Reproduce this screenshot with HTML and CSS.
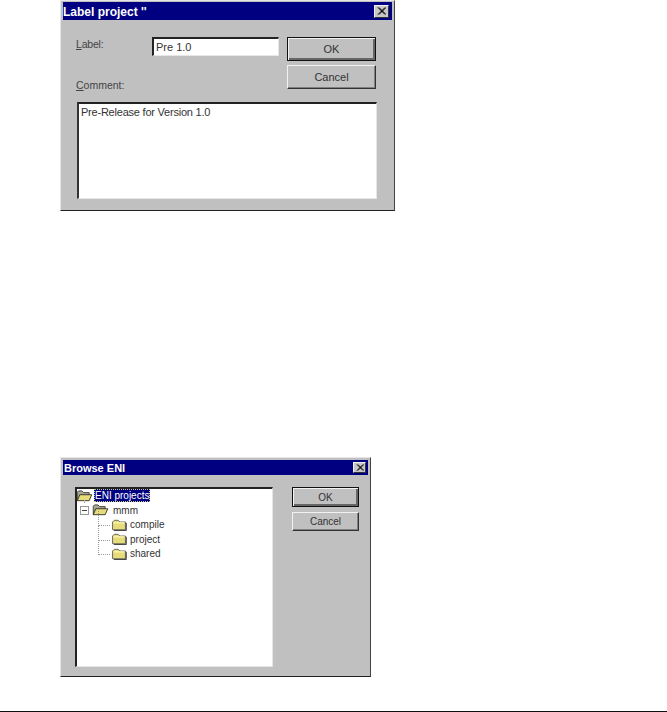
FILE: index.html
```html
<!DOCTYPE html>
<html lang="en">
<head>
<meta charset="utf-8">
<title>ENI dialogs</title>
<link rel="stylesheet" href="styles.css">
</head>
<body>
<svg class="defs" width="0" height="0" aria-hidden="true">
  <symbol id="folder" viewBox="0 0 18 14">
    <path d="M1.5 12.5V3.5L3.5 1.5H8L10 3.5H16.5V12.5Z" fill="#e6dc78" stroke="#555" stroke-width="1"/>
    <path d="M2.5 4.5H15.5" stroke="#fff6b0" stroke-width="1.5"/>
    <path d="M17.5 4.5V13.5H3" stroke="#222" stroke-width="1" fill="none"/>
  </symbol>
  <symbol id="folder-open" viewBox="0 0 20 14">
    <path d="M1.5 12.5V2.5L3 1H7L9 3H15.5V5.5" fill="#a8a890" stroke="#333" stroke-width="1"/>
    <path d="M1.5 12.5L4.5 5.5H18.5L15.5 12.5Z" fill="#e6dc78" stroke="#222" stroke-width="1"/>
  </symbol>
</svg>

<section class="dialog dialog-label">
  <header class="titlebar">
    <span class="title">Label project ''</span>
    <span class="close"><svg width="9" height="8" viewBox="0 0 9 8"><path d="M1 0.5L8 7.5M2 0.5L9 7.5M8 0.5L1 7.5M9 0.5L2 7.5" stroke="#000" fill="none"/></svg></span>
  </header>
  <div class="label-body">
    <div class="label-top">
      <div class="label-fields">
        <div class="label-row">
          <label class="caption"><u>L</u>abel:</label>
          <div class="field input">Pre 1.0</div>
        </div>
        <label class="caption comment-caption"><u>C</u>omment:</label>
      </div>
      <div class="buttons buttons-label">
        <button class="btn btn-default">OK</button>
        <button class="btn">Cancel</button>
      </div>
    </div>
    <div class="field memo">Pre-Release for Version 1.0</div>
  </div>
</section>

<section class="dialog dialog-browse">
  <header class="titlebar">
    <span class="title">Browse ENI</span>
    <span class="close"><svg width="9" height="8" viewBox="0 0 9 8"><path d="M1 0.5L8 7.5M2 0.5L9 7.5M8 0.5L1 7.5M9 0.5L2 7.5" stroke="#000" fill="none"/></svg></span>
  </header>
  <div class="browse-body">
    <div class="field tree">
      <div class="node node-root">
        <svg class="ico-open" width="20" height="14"><use href="#folder-open"/></svg>
        <span class="node-text selected">ENI projects</span>
      </div>
      <div class="node node-mmm">
        <span class="expander"></span>
        <svg class="ico-open" width="20" height="14"><use href="#folder-open"/></svg>
        <span class="node-text">mmm</span>
      </div>
      <div class="node node-leaf">
        <svg class="ico" width="18" height="14"><use href="#folder"/></svg>
        <span class="node-text">compile</span>
      </div>
      <div class="node node-leaf">
        <svg class="ico" width="18" height="14"><use href="#folder"/></svg>
        <span class="node-text">project</span>
      </div>
      <div class="node node-leaf node-last">
        <svg class="ico" width="18" height="14"><use href="#folder"/></svg>
        <span class="node-text">shared</span>
      </div>
    </div>
    <div class="buttons buttons-browse">
      <button class="btn btn-default">OK</button>
      <button class="btn">Cancel</button>
    </div>
  </div>
</section>

<footer class="rule"></footer>
</body>
</html>
```

FILE: styles.css
```css
html, body {
  margin: 0;
  padding: 0;
  background: #fff;
  height: 712px;
  overflow: hidden;
}
body {
  position: relative;
  font-family: "Liberation Sans", Arial, sans-serif;
  font-size: 11px;
  color: #333;
}
.defs { position: absolute; }

.dialog {
  box-sizing: border-box;
  margin-left: 60px;
  background: #c0c0c0;
  border-top: 1px solid #e6e6e6;
  border-left: 1px solid #e6e6e6;
  border-right: 1px solid #444;
  border-bottom: 1px solid #222;
  padding: 1px 2px 0 2px;
}
.dialog-label { width: 335px; height: 211px; }
.dialog-browse { width: 311px; height: 220px; margin-top: 246px; padding-top: 2px; }

.titlebar {
  display: flex;
  align-items: center;
  justify-content: space-between;
  background: #000080;
  color: #fff;
  height: 18px;
  padding: 0 3px 0 0;
}
.dialog-browse .titlebar { height: 15px; padding-right: 2px; padding-left: 1px; }
.title { font-weight: bold; font-size: 12px; padding-top: 1px; }
.dialog-browse .title { font-size: 11px; padding-top: 0; }

.close {
  box-sizing: border-box;
  width: 15px;
  height: 13px;
  display: flex;
  align-items: center;
  justify-content: center;
  background: #c8c8c8;
  border: 1px solid;
  border-color: #f0f0f0 #333 #333 #f0f0f0;
}
.dialog-browse .close { width: 13px; height: 11px; }
.dialog-browse .close svg { width: 8px; height: 7px; }

.label-body {
  display: flex;
  flex-direction: column;
  padding: 17px 0 0 13px;
}
.label-top {
  display: flex;
  height: 65px;
  gap: 8px;
}
.label-fields { display: flex; flex-direction: column; width: 203px; }
.label-row { display: flex; align-items: center; height: 19px; }
.caption { font-size: 10.5px; letter-spacing: -0.2px; color: #444; line-height: 13px; }
.label-row .caption { width: 76px; padding-bottom: 5px; }
.comment-caption { margin-top: 23px; letter-spacing: 0; }

.field {
  box-sizing: border-box;
  background: #fff;
  border: 1px solid;
  border-color: #222 #e6e6e6 #e6e6e6 #222;
  color: #333;
}
.input {
  width: 127px;
  height: 19px;
  line-height: 16px;
  font-size: 11px;
  padding-left: 2px;
  border-left-width: 2px;
  border-top-width: 2px;
}
.memo {
  width: 300px;
  height: 97px;
  margin-left: 1px;
  padding: 1px 2px;
  font-size: 11px;
  letter-spacing: -0.22px;
  line-height: 14px;
  border-left-width: 2px;
  border-top-width: 2px;
  border-left-color: #333;
  border-top-color: #222;
}

.buttons { display: flex; flex-direction: column; }
.buttons-label { width: 89px; gap: 4px; }
.btn {
  display: block;
  box-sizing: border-box;
  width: 100%;
  padding: 0;
  margin: 0;
  background: #c0c0c0;
  font-family: "Liberation Sans", Arial, sans-serif;
  font-size: 11px;
  color: #333;
  border: 1px solid;
  border-color: #f2f2f2 #333 #333 #f2f2f2;
  box-shadow: inset -1px -1px 0 #808080;
}
.buttons-label .btn { height: 24px; }
.buttons-browse .btn { height: 19px; font-size: 10px; }
.buttons-browse .btn-default { height: 20px; }
.buttons-browse { width: 67px; gap: 5px; }
.btn-default {
  border: 1px solid #111;
  box-shadow: inset 1px 1px 0 #f2f2f2, inset -2px -2px 0 #666;
}

.browse-body {
  display: flex;
  align-items: flex-start;
  justify-content: space-between;
  padding: 12px 9px 0 12px;
}
.tree {
  width: 198px;
  height: 180px;
  font-size: 10px;
  border-left-width: 2px;
  border-top-width: 2px;
}
.node {
  position: relative;
  display: flex;
  align-items: center;
  height: 14.5px;
  margin-left: -1px;
  white-space: nowrap;
}
.node-root { height: 13px; }
.node-mmm { padding-left: 7px; margin-top: 1px; }
.node-mmm .node-text { margin-left: 3px; }
.node-leaf { padding-left: 35px; }
.ico, .ico-open { flex: none; width: 16px; height: 12px; }
.ico-open { width: 17px; }
.node-text { margin-left: 1px; padding: 0 1px; line-height: 13px; font-size: 10px; }
.node-leaf .node-text { margin-left: 2px; }
.selected {
  background: #000080;
  color: #fff;
  outline: 1px dotted #c8c880;
  outline-offset: -1px;
}
.expander {
  box-sizing: border-box;
  position: relative;
  width: 9px;
  height: 9px;
  margin-right: 3px;
  margin-left: -3px;
  background: #fff;
  border: 1px solid #999;
  flex: none;
}
.expander::before {
  content: "";
  position: absolute;
  left: 1px;
  right: 1px;
  top: 3px;
  height: 1px;
  background: #444;
}
.node-mmm::before {
  content: "";
  position: absolute;
  left: 8px;
  top: -3px;
  height: 3px;
  border-left: 1px dotted #999;
}
.node-leaf::before {
  content: "";
  position: absolute;
  left: 22px;
  top: -7px;
  bottom: 6px;
  width: 11px;
  border-left: 1px dotted #999;
  border-bottom: 1px dotted #999;
}

.rule {
  position: absolute;
  left: 0;
  right: 0;
  top: 711px;
  height: 1px;
  background: #111;
}
```
